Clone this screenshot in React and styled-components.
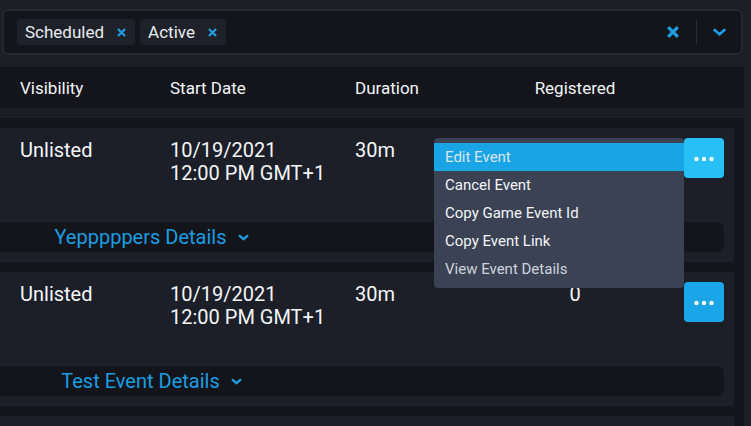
import React from 'react';
import styled, { createGlobalStyle } from 'styled-components';

const GlobalStyle = createGlobalStyle`
  html, body {
    margin: 0;
    padding: 0;
    overflow: hidden;
    background: #1b1e25;
  }
  body {
    font-family: Roboto, 'Liberation Sans', Arial, sans-serif;
    color: #f2f4f7;
  }
  * { box-sizing: border-box; }
`;

const events = [
  { id: 1, name: 'Yepppppers', visibility: 'Unlisted', date: '10/19/2021', time: '12:00 PM GMT+1', duration: '30m', registered: '0', menuOpen: true },
  { id: 2, name: 'Test Event', visibility: 'Unlisted', date: '10/19/2021', time: '12:00 PM GMT+1', duration: '30m', registered: '0' },
];

const menuItems = ['Edit Event', 'Cancel Event', 'Copy Game Event Id', 'Copy Event Link', 'View Event Details'];

const XIcon = ({ size = 9, stroke = 2.4 }) => (
  <svg width={size} height={size} viewBox="0 0 10 10">
    <path d="M1 1 L9 9 M9 1 L1 9" stroke="#1e9fe3" strokeWidth={stroke} fill="none" />
  </svg>
);

const Chevron = ({ width = 15, height = 8, stroke = 3 }) => (
  <svg width={width} height={height} viewBox="0 0 16 9">
    <polyline points="1.5,1.5 8,7 14.5,1.5" stroke="#1e9fe3" strokeWidth={stroke} fill="none" strokeLinejoin="miter" />
  </svg>
);

const Dots = () => (
  <svg width="20" height="6" viewBox="0 0 20 6">
    <circle cx="2.5" cy="3" r="2.2" fill="#fff" />
    <circle cx="10" cy="3" r="2.2" fill="#fff" />
    <circle cx="17.5" cy="3" r="2.2" fill="#fff" />
  </svg>
);

const App = () => {
  return (
    <Page>
      <GlobalStyle />
      <FilterBox>
        <Tags>
          <Tag>
            <span>Scheduled</span>
            <XIcon />
          </Tag>
          <Tag>
            <span>Active</span>
            <XIcon />
          </Tag>
        </Tags>
        <Controls>
          <ClearButton>
            <XIcon size={12} stroke={2.6} />
          </ClearButton>
          <Separator />
          <DropButton>
            <Chevron />
          </DropButton>
        </Controls>
      </FilterBox>

      <HeaderRow>
        <Cell>Visibility</Cell>
        <Cell>Start Date</Cell>
        <Cell>Duration</Cell>
        <Cell center>Registered</Cell>
      </HeaderRow>

      <List>
        {events.map((ev) => (
          <Card key={ev.id}>
            <MainRow>
              <Cell>{ev.visibility}</Cell>
              <Cell>
                {ev.date}
                <br />
                {ev.time}
              </Cell>
              <Cell>{ev.duration}</Cell>
              <Cell center>{ev.menuOpen ? '' : ev.registered}</Cell>
              <Actions>
                <DotsButton active={ev.menuOpen}>
                  <Dots />
                </DotsButton>
                {ev.menuOpen && (
                  <Menu>
                    {menuItems.map((item, i) => (
                      <MenuItem key={item} highlighted={i === 0} dim={i === menuItems.length - 1}>
                        {item}
                      </MenuItem>
                    ))}
                  </Menu>
                )}
              </Actions>
            </MainRow>
            <DetailsBar>
              <DetailsToggle>
                {ev.name} Details
                <Chevron width={11} height={7} stroke={3.4} />
              </DetailsToggle>
            </DetailsBar>
          </Card>
        ))}
        {/* next row, only its top edge is in view */}
        <Card>
          <MainRow>
            <Actions>
              <DotsButton>
                <Dots />
              </DotsButton>
            </Actions>
          </MainRow>
        </Card>
      </List>
    </Page>
  );
};

const Page = styled.div`
  min-height: 100vh;
  background: #1b1e25;
  padding-top: 9px;
`;

const FilterBox = styled.div`
  display: flex;
  align-items: center;
  height: 46px;
  margin: 0 8px 0 2px;
  padding-left: 13px;
  background: #13151b;
  border: 2px solid #23272f;
  border-radius: 6px;
`;

const Tags = styled.div`
  flex: 1;
  display: flex;
  gap: 5px;
`;

const Tag = styled.div`
  display: flex;
  align-items: center;
  gap: 13px;
  height: 26px;
  padding: 0 9px 0 8px;
  background: #1e2129;
  border-radius: 3px;
  font-size: 17px;
  color: #e9ecf0;
`;

const Controls = styled.div`
  display: flex;
  align-items: center;
`;

const ClearButton = styled.div`
  width: 30px;
  height: 30px;
  display: flex;
  align-items: center;
  justify-content: center;
`;

const Separator = styled.div`
  width: 1px;
  height: 24px;
  margin-left: 8px;
  background: #2b2f37;
`;

const DropButton = styled.div`
  width: 44px;
  height: 30px;
  display: flex;
  align-items: center;
  justify-content: center;
`;

const columns = '150px 185px 145px 150px 1fr';

const HeaderRow = styled.div`
  display: grid;
  grid-template-columns: ${columns};
  align-items: center;
  height: 41px;
  margin: 12px 7px 0 0;
  padding-left: 20px;
  background: #13151b;
  font-size: 17px;
  color: #f2f4f7;
`;

const Cell = styled.div`
  text-align: ${(p) => (p.center ? 'center' : 'left')};
`;

const List = styled.div`
  display: flex;
  flex-direction: column;
  gap: 10px;
  margin: 10px 7px 0 0;
  padding: 10px 10px 10px 0;
  background: #13151b;
`;

const Card = styled.div`
  background: #1c1f27;
  padding: 10px 10px 10px 0;
`;

const MainRow = styled.div`
  display: grid;
  grid-template-columns: ${columns} 40px;
  align-items: start;
  height: 84px;
  padding-left: 20px;
  font-size: 20px;
  line-height: 23.4px;
  color: #f4f6f9;

  ${Cell} {
    padding-top: 1px;
  }
`;

const Actions = styled.div`
  grid-column: 6;
  position: relative;
`;

const DotsButton = styled.div`
  width: 40px;
  height: 40px;
  display: flex;
  align-items: center;
  justify-content: center;
  padding-top: 2px;
  border-radius: 4px;
  background: ${(p) => (p.active ? '#26bff6' : '#19a5e8')};
`;

const Menu = styled.div`
  position: absolute;
  top: 0;
  right: 100%;
  z-index: 5;
  width: 250px;
  padding: 5px 0;
  background: #3a4253;
  border-radius: 4px;
`;

const MenuItem = styled.div`
  height: 28px;
  display: flex;
  align-items: center;
  padding: 1px 0 0 11px;
  font-size: 15px;
  background: ${(p) => (p.highlighted ? '#19a4e6' : 'transparent')};
  color: ${(p) => (p.highlighted ? '#dce5ee' : p.dim ? '#cfd4dc' : '#f3f5f8')};
`;

const DetailsBar = styled.div`
  height: 30px;
  display: flex;
  align-items: center;
  background: #13151b;
  border-radius: 0 8px 8px 0;
`;

const DetailsToggle = styled.div`
  width: 303px;
  display: flex;
  align-items: center;
  justify-content: center;
  gap: 11px;
  font-size: 20px;
  color: #1b9de2;
`;

export default App;
